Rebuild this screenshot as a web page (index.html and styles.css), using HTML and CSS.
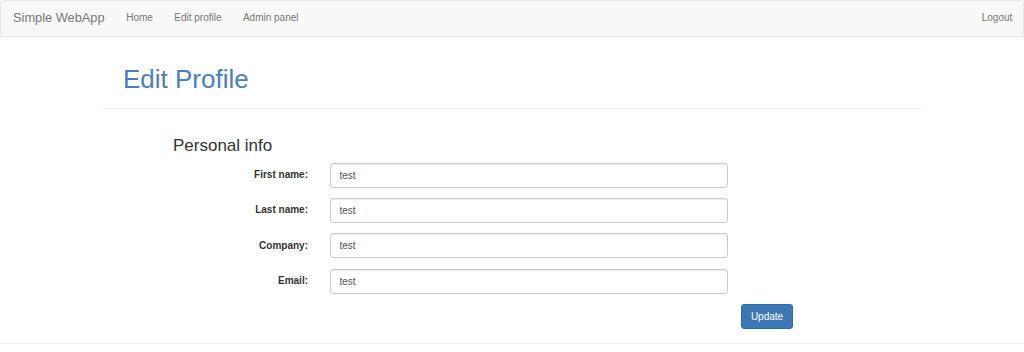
FILE: index.html
```html
<!DOCTYPE html>
<html lang="en">
  <head>
    <meta charset="utf-8" />
    <meta name="viewport" content="width=device-width, initial-scale=1" />
    <title>Simple WebApp - Edit profile</title>
    <link rel="stylesheet" href="styles.css">
  </head>
  <body>
    <nav class="navbar">
      <a class="brand" href="#">Simple WebApp</a>
      <ul class="nav">
        <li><a href="#">Home</a></li>
        <li><a href="#">Edit profile</a></li>
        <li><a href="#">Admin panel</a></li>
      </ul>
      <ul class="nav nav-right">
        <li><a href="#">Logout</a></li>
      </ul>
    </nav>
    <main class="container">
      <div class="page-header">
        <h1 class="title">Edit Profile</h1>
      </div>
      <form class="profile-form">
        <h3 class="section-title">Personal info</h3>
        <div class="form-row">
          <label class="control-label" for="first">First name:</label>
          <input class="form-control" id="first" type="text" value="test" />
        </div>
        <div class="form-row">
          <label class="control-label" for="last">Last name:</label>
          <input class="form-control" id="last" type="text" value="test" />
        </div>
        <div class="form-row">
          <label class="control-label" for="company">Company:</label>
          <input class="form-control" id="company" type="text" value="test" />
        </div>
        <div class="form-row">
          <label class="control-label" for="email">Email:</label>
          <input class="form-control" id="email" type="text" value="test" />
        </div>
        <div class="form-actions">
          <button class="btn-primary" type="button">Update</button>
        </div>
      </form>
    </main>
    <footer class="footer"></footer>
  </body>
</html>
```

FILE: styles.css
```css
body {
  margin: 0;
  background-color: #fff;
  color: #333;
  font-family: "Liberation Sans", Arial, sans-serif;
  font-size: 10px;
  line-height: 1.43;
}

.navbar {
  display: flex;
  align-items: center;
  height: 35px;
  background-color: #f8f8f8;
  border: 1px solid #e7e7e7;
  border-radius: 3px;
}

.brand {
  padding: 0 11px 0 12px;
  color: #777;
  font-size: 12.8px;
  text-decoration: none;
}

.nav {
  display: flex;
  list-style: none;
  margin: 0;
  padding: 0;
}

.nav a {
  display: block;
  padding: 0 10.7px;
  color: #777;
  text-decoration: none;
}

.nav-right {
  margin-left: auto;
}

.container {
  width: 820px;
  margin: 0 auto;
}

.page-header {
  margin-top: 28px;
  padding-bottom: 14px;
  border-bottom: 1px solid #eee;
}

.title {
  margin: 0;
  padding-left: 21px;
  color: #4a7fba;
  font-size: 26px;
  font-weight: 500;
  line-height: 29px;
}

.profile-form {
  padding-top: 28px;
}

.section-title {
  margin: 0 0 7px;
  padding-left: 71px;
  font-size: 17px;
  font-weight: 500;
  line-height: 18.7px;
}

.form-row {
  display: grid;
  grid-template-columns: 206px 398px;
  column-gap: 22px;
  align-items: center;
  margin-bottom: 10.3px;
}

.control-label {
  text-align: right;
  font-weight: bold;
}

.form-control {
  box-sizing: border-box;
  height: 25px;
  margin: 0;
  padding: 0 8.5px;
  border: 1px solid #ccc;
  border-radius: 3px;
  box-shadow: inset 0 1px 1px rgba(0, 0, 0, .075);
  color: #555;
  font-family: inherit;
  font-size: 10px;
}

.form-actions {
  padding-left: 639px;
}

.btn-primary {
  height: 25px;
  width: 52px;
  padding: 0;
  background-color: #3b78b5;
  border: 1px solid #2e6da4;
  border-radius: 3px;
  color: #fff;
  font-family: inherit;
  font-size: 10px;
}

.footer {
  margin-top: 14px;
  border-top: 1px solid #eee;
}
```
